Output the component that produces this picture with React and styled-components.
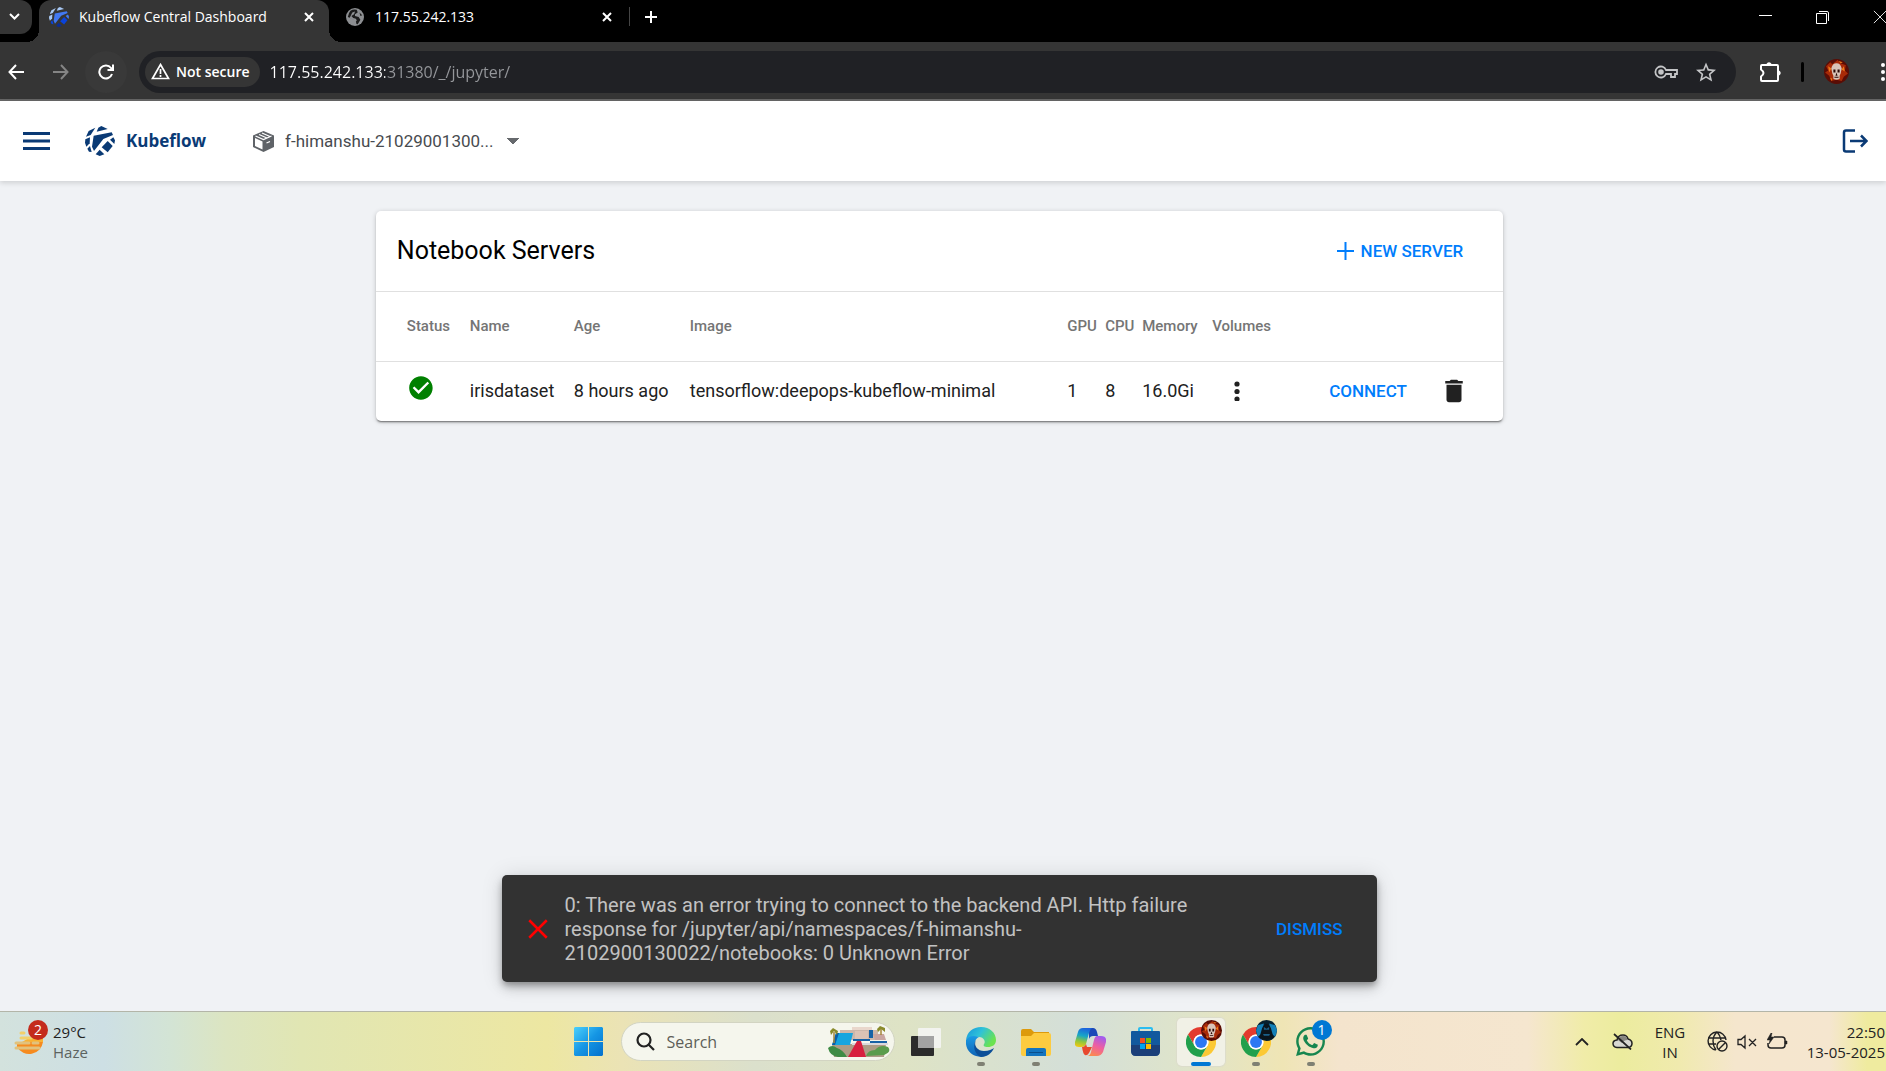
import React from "react";
import styled, { createGlobalStyle, css } from "styled-components";
import { FaWhatsapp } from "react-icons/fa";

const uiFont = '"Open Sans", "Noto Sans", sans-serif';
const webFont = 'Roboto, "Liberation Sans", sans-serif';

const GlobalStyle = createGlobalStyle`
  *, *::before, *::after { box-sizing: border-box; }
  body { margin: 0; background: #f0f2f5; font-family: ${webFont}; overflow: hidden; }
  button, input, select { font: inherit; color: inherit; margin: 0; padding: 0; border: 0; background: none; outline: none; }
  button, select { cursor: pointer; }
  svg { display: block; flex: none; }
`;

const Page = styled.div`
  min-height: 100vh;
  display: flex;
  flex-direction: column;
  overflow: hidden;
`;

/* ---------- browser window ---------- */

const TabStrip = styled.header`
  height: 42px;
  display: flex;
  background: #000;
  color: #fff;
  font: 14px/20px ${uiFont};
`;

const TabSearch = styled.button`
  width: 32px;
  height: 34px;
  padding-right: 4px;
  border-radius: 0 12px 12px 0;
  background: #353535;
  display: flex;
  align-items: center;
  justify-content: center;
`;

const Tab = styled.div`
  position: relative;
  width: ${(p) => (p.$active ? 290 : 301)}px;
  margin-left: ${(p) => (p.$active ? 7 : 0)}px;
  padding: 0 12px 8px 10px;
  display: flex;
  align-items: center;
  gap: 10px;
  border-radius: 12px 12px 0 0;
  ${(p) =>
    p.$active
      ? css`
          background: #353535;
          &::before,
          &::after {
            content: "";
            position: absolute;
            bottom: 0;
            width: 12px;
            height: 12px;
          }
          &::before {
            left: -12px;
            background: radial-gradient(circle at 0 0, transparent 12px, #353535 12px);
          }
          &::after {
            right: -12px;
            background: radial-gradient(circle at 100% 0, transparent 12px, #353535 12px);
          }
        `
      : css`
          padding-left: 17px;
          gap: 11px;
          &::after {
            content: "";
            position: absolute;
            right: 0;
            top: 7px;
            width: 1px;
            height: 19px;
            background: #454545;
          }
        `}
`;

const TabTitle = styled.button`
  flex: 1;
  text-align: left;
  white-space: nowrap;
`;

const CloseTab = styled.button`
  width: 16px;
  height: 16px;
  margin-right: ${(p) => (p.$active ? 0 : 3)}px;
`;

const NewTab = styled.button`
  width: 42px;
  height: 34px;
  display: flex;
  align-items: center;
  justify-content: center;
`;

const WindowControls = styled.div`
  margin: 0 -22px 0 auto;
  display: flex;
  height: 34px;
`;

const WindowButton = styled.button`
  width: 57px;
  display: flex;
  align-items: center;
  justify-content: center;
`;

const Toolbar = styled.nav`
  height: 59px;
  padding: 8px 0 6px;
  display: flex;
  align-items: center;
  background: #353535;
  border-bottom: 2px solid #666;
  color: #fff;
  font-family: ${uiFont};
`;

const NavButtons = styled.div`
  display: flex;
  gap: 3px;
  margin: 0 12px 0 -5px;
`;

const RoundButton = styled.button`
  width: 42px;
  height: 42px;
  border-radius: 50%;
  display: flex;
  align-items: center;
  justify-content: center;
  background: ${(p) => (p.$raised ? "#393939" : "transparent")};
`;

const AddressBar = styled.div`
  flex: 1;
  height: 42px;
  padding: 0 20px 0 6px;
  display: flex;
  align-items: center;
  gap: 10px;
  border-radius: 21px;
  background: #202125;
`;

const SecurityChip = styled.button`
  height: 30px;
  padding: 0 10px 0 6px;
  display: flex;
  align-items: center;
  gap: 6px;
  border-radius: 15px;
  background: #353535;
  font-size: 14px;
  font-weight: 600;
  white-space: nowrap;
`;

const AddressInput = styled.input`
  flex: 1;
  min-width: 0;
  height: 30px;
  font-size: 16px;
  color: transparent;
  background: linear-gradient(90deg, #fff 0 115px, #95979b 115px);
  background-clip: text;
  -webkit-background-clip: text;
`;

const AddressActions = styled.div`
  display: flex;
  align-items: center;
  gap: 18px;
  color: #c4c5c7;
`;

const ToolbarActions = styled.div`
  display: flex;
  align-items: center;
  gap: 20px;
  margin: 0 -11px 0 23px;
`;

const ToolbarRule = styled.span`
  width: 3px;
  height: 20px;
  border-radius: 2px;
  background: #000;
`;

const PlainButton = styled.button`
  display: flex;
  align-items: center;
  justify-content: center;
`;

/* ---------- dashboard ---------- */

const AppBar = styled.header`
  position: relative;
  height: 80px;
  padding: 0 18px 0 23px;
  display: flex;
  align-items: center;
  background: #fff;
  color: #0a3a75;
  box-shadow: 0 2px 5px rgba(0, 0, 0, 0.14);
`;

const Brand = styled.a`
  margin-left: 35px;
  display: flex;
  align-items: center;
  gap: 11px;
  color: #0a3a75;
  text-decoration: none;
  font: 700 17px/24px ${uiFont};
`;

const NamespacePicker = styled.label`
  margin-left: 47px;
  display: flex;
  align-items: center;
  gap: 11px;
  color: #5f6368;
`;

const NamespaceSelect = styled.select`
  appearance: none;
  width: 234px;
  padding-right: 16px;
  font-size: 17px;
  line-height: 24px;
  color: #484b4f;
  background-repeat: no-repeat;
  background-size: 6px 6px;
  background-position: right 6px center, right 0 center;
  background-image: linear-gradient(to bottom left, #66696d 50%, transparent 51%),
    linear-gradient(to bottom right, #66696d 50%, transparent 51%);
`;

const LogoutButton = styled(PlainButton)`
  margin-left: auto;
`;

const Main = styled.main`
  position: relative;
  flex: 1;
  padding: 30px 7px 0 0;
`;

const Card = styled.section`
  width: 60%;
  margin: 0 auto;
  background: #fff;
  border-radius: 5px;
  box-shadow: 0 2px 2px -1px rgba(0, 0, 0, 0.5), 0 1px 5px rgba(0, 0, 0, 0.2);
`;

const CardHeader = styled.div`
  height: 81px;
  padding: 0 40px 0 21px;
  display: flex;
  align-items: center;
  justify-content: space-between;
  border-bottom: 1px solid #e0e0e0;
`;

const CardTitle = styled.h1`
  margin: 0;
  font-size: 25px;
  line-height: 32px;
  font-weight: 400;
  color: #000;
`;

const LinkButton = styled.button`
  display: flex;
  align-items: center;
  gap: 7px;
  font-size: 17px;
  line-height: 24px;
  font-weight: 500;
  color: #007dfc;
  text-transform: uppercase;
`;

const ServerTable = styled.table`
  width: 100%;
  table-layout: fixed;
  border-collapse: collapse;
  color: #212121;
  font-size: 18px;
  line-height: 24px;
  text-align: left;

  th {
    height: 69px;
    padding: 0;
    border-bottom: 1px solid #e0e0e0;
    font-size: 15px;
    font-weight: 500;
    color: #757575;
  }
  td {
    height: 60px;
    padding: 0;
    white-space: nowrap;
  }
  th:first-child {
    padding-left: 31px;
  }
  td:first-child {
    padding-left: 32px;
  }
`;

const Column = styled.col`
  width: ${(p) => (p.$width ? `${p.$width}px` : "auto")};
`;

const MenuButton = styled(PlainButton)`
  width: 50px;
`;

const RowActions = styled.div`
  display: flex;
  align-items: center;
  gap: 32px;
`;

const SnackbarRegion = styled.div`
  position: absolute;
  left: 0;
  right: 8px;
  bottom: 29px;
  display: flex;
  justify-content: center;
`;

const Snackbar = styled.div`
  width: 100%;
  max-width: 875px;
  padding: 18px 34px 17px 26px;
  display: flex;
  align-items: center;
  border-radius: 5px;
  background: #323232;
  color: #c2c2c2;
  box-shadow: 0 4px 6px -1px rgba(0, 0, 0, 0.3), 0 7px 12px rgba(0, 0, 0, 0.14), 0 1px 22px rgba(0, 0, 0, 0.12);
`;

const SnackMessage = styled.p`
  flex: 1;
  margin: 0 55px 0 17px;
  font-size: 20px;
  line-height: 24px;
`;

/* ---------- desktop taskbar ---------- */

const Taskbar = styled.footer`
  height: 60px;
  display: grid;
  grid-template-columns: 1fr auto 1fr;
  align-items: center;
  border-top: 1px solid #b3b5a8;
  font: 15px/20px ${uiFont};
  color: #222;
  background: linear-gradient(
    90deg,
    #d3e2dd 0%,
    #cddfe4 5.5%,
    #d3e4d5 9%,
    #dce5c1 12%,
    #e1e6b3 16%,
    #ede7a2 29%,
    #ebe3b5 33%,
    #dbe0cc 40%,
    #dee3c5 48%,
    #d4dfd8 57%,
    #dfe4ca 63%,
    #efe5b5 68%,
    #f4e4cd 71%,
    #f5e6cf 81%,
    #f0eca8 84%,
    #ecec9e 86%,
    #f0eaae 89%,
    #f5e6cd 92%,
    #f5e6cf 97%,
    #efeb9f 99%
  );
`;

const Weather = styled.button`
  position: relative;
  padding-left: 14px;
  display: flex;
  align-items: center;
  gap: 8px;
  text-align: left;
`;

const Muted = styled.div`
  color: #5c635f;
`;

const Dock = styled.div`
  margin-left: 13px;
  display: flex;
  align-items: center;
  gap: 7px;
`;

const DockButton = styled.button`
  position: relative;
  width: 48px;
  height: 48px;
  display: flex;
  align-items: center;
  justify-content: center;
  border-radius: 5px;
  ${(p) => p.$active && "background: #f1f1e6; box-shadow: 0 0 1px 1px #dcdccb;"}
  &::after {
    content: "";
    position: absolute;
    bottom: 0;
    left: 50%;
    transform: translateX(-50%);
    width: ${(p) => (p.$active ? 20 : p.$open ? 8 : 0)}px;
    height: 4px;
    border-radius: 2px;
    background: ${(p) => (p.$active ? "#0078d4" : "#7f8073")};
  }
`;

const TaskSearch = styled.label`
  width: 274px;
  height: 39px;
  margin-left: 1px;
  padding: 0 4px 0 14px;
  display: flex;
  align-items: center;
  gap: 12px;
  border-radius: 20px;
  background: #f5f6ed;
  border: 1px solid #d2d4c2;
  font-size: 16px;
`;

const SearchInput = styled.input`
  flex: 1;
  min-width: 0;
  &::placeholder {
    color: #5d5e58;
    opacity: 1;
  }
`;

const CountBadge = styled.span`
  position: absolute;
  top: ${(p) => p.$top}px;
  left: ${(p) => p.$left}px;
  width: 20px;
  height: 20px;
  border-radius: 50%;
  background: ${(p) => p.$color};
  color: #fff;
  font-size: 14px;
  line-height: 20px;
  text-align: center;
`;

const ProfileBadge = styled.span`
  position: absolute;
  top: 2px;
  right: 3px;
`;

const Tray = styled.div`
  display: flex;
  align-items: center;
  justify-content: flex-end;
`;

const TrayButton = styled(PlainButton)`
  width: ${(p) => p.$width}px;
  text-align: center;
`;

const Clock = styled.time`
  width: 90px;
  padding-right: 1px;
  text-align: right;
  white-space: nowrap;
`;

/* ---------- drawings ---------- */

const Cross = ({ size = 16, width = 2, inset = 4, color = "#fff" }) => (
  <svg width={size} height={size} viewBox="0 0 16 16" stroke={color} strokeWidth={width} fill="none">
    <path d={`M${inset} ${inset}L${16 - inset} ${16 - inset}M${16 - inset} ${inset}L${inset} ${16 - inset}`} />
  </svg>
);

const KubeflowMark = ({ size, colors = [] }) => {
  const c = (i) => colors[i] || "#0a3a75";
  return (
    <svg width={size} height={size} viewBox="0 0 90 90">
      <path fill={c(0)} d="M31 5L11 15L3 32L17 27Z" />
      <path fill={c(0)} d="M35 17L40 5L49 0L68 9Z" />
      <path fill={c(1)} d="M26 29L80 19L84 27L55 39L27 75L21 62Z" />
      <path fill={c(0)} d="M1 40L15 34L14 52L4 62L0 50Z" />
      <path fill={c(2)} d="M7 68L15 60L20 78L12 77Z" />
      <path fill={c(2)} d="M68 45L83 60L68 79L50 64Z" />
      <path fill={c(1)} d="M85 34L90 43L88 54L75 41Z" />
      <path fill={c(3)} d="M32 85L44 71L58 85L44 90Z" />
    </svg>
  );
};

const Skull = ({ size, blue }) => (
  <svg width={size} height={size} viewBox="0 0 24 24">
    <circle cx="12" cy="12" r="12" fill={blue ? "#06202f" : "#5a0d05"} />
    {blue ? (
      <g>
        <path d="M2 6L9 4L7 15L2 19L0 12ZM22 6L15 4L17 15L22 19L24 12Z" fill="#1480b8" />
        <path d="M7 9Q12 0 17 9L20 20Q12 25 4 20Z" fill="#0a151d" />
        <path d="M9 8L12 10L15 8V11H9ZM8 16H16L15 18H9Z" fill="#1a5f88" />
      </g>
    ) : (
      <g>
        <path d="M2 7L6 3L8 5L13 1L16 4L21 6L20 11L23 14L19 17L17 21L12 20L7 21L5 16L1 13L4 11Z" fill="#a82a08" />
        <path d="M4 7l3 2-2 4zM19 7l-2 3 3 2zM14 2l2 2 2-1zM6 18l2 1-1 2z" fill="#f07d1a" />
        <path d="M7 9Q8 4 12 4T17 9L16 14L15 16V19Q12 21 9 19V16L8 14Z" fill="#d9c3b8" />
        <path d="M9 10h2v3H9zM13 10h2v3h-2zM12 13l1 3h-2zM10 17h4v1h-4z" fill="#2a0805" />
      </g>
    )}
  </svg>
);

const ChromeLogo = () => (
  <svg width="30" height="30" viewBox="0 0 48 48">
    <path fill="#e33b2e" d="M24 0a24 24 0 0 1 20.8 12H24a12 12 0 0 0-10.4 18L3.2 12A24 24 0 0 1 24 0z" />
    <path fill="#fcc934" d="M44.8 12A24 24 0 0 1 24 48l10.4-18A12 12 0 0 0 34.4 18L24 12z" />
    <path fill="#21a04c" d="M3.2 12A24 24 0 0 0 24 48l10.4-18a12 12 0 0 1-20.8 0z" />
    <circle cx="24" cy="24" r="12" fill="#fff" />
    <circle cx="24" cy="24" r="9.5" fill="#2c78f3" />
  </svg>
);

const EdgeLogo = () => (
  <svg width="30" height="30" viewBox="0 0 30 30">
    <defs>
      <linearGradient id="edgeTop" x1="0" y1="0" x2="1" y2="0.5">
        <stop offset="0" stopColor="#1595dc" />
        <stop offset="0.5" stopColor="#2fc2d8" />
        <stop offset="1" stopColor="#6be34f" />
      </linearGradient>
      <linearGradient id="edgeSide" x1="0" y1="0" x2="0" y2="1">
        <stop offset="0" stopColor="#1a9be4" />
        <stop offset="1" stopColor="#0f63b5" />
      </linearGradient>
    </defs>
    <path fill="url(#edgeTop)" d="M0 13C1 5 7 0 15 0C24 0 30 6 30 13C30 18 26 20 22 20C18 20 17 19 18 17C20 15 18 10 13 10C7 9 2 10 0 13Z" />
    <path fill="url(#edgeSide)" d="M0 13C2 9 8 8 13 10C10 11 8 15 9 19C10 25 15 29 21 28C18 30 14 30 10 29C3 27-1 20 0 13Z" />
    <path fill="#0c4f98" d="M10 13C7 19 12 24 18 24C23 24 26 22 28 21C26 26 21 30 15 30C9 28 6 19 10 13Z" />
  </svg>
);

const FolderIcon = () => (
  <svg width="30" height="28" viewBox="0 0 30 28">
    <path fill="#dd9a0c" d="M0 3Q0 1 2 1H10L13 4H28V12H0Z" />
    <path fill="#fdcb40" d="M0 8H10L13 5H28Q30 5 30 7V26Q30 28 28 28H2Q0 28 0 26Z" />
    <path fill="#1374bf" d="M5 28V22Q5 20 7 20H23Q25 20 25 22V28Z" />
    <path stroke="#0a4f8c" d="M8 24.500H22" />
  </svg>
);

const CopilotLogo = () => (
  <svg width="31" height="28" viewBox="0 0 31 28">
    <defs>
      <linearGradient id="copA" x1="0.5" y1="0" x2="0.3" y2="1">
        <stop offset="0" stopColor="#1c63dd" />
        <stop offset="0.4" stopColor="#17a6c8" />
        <stop offset="0.7" stopColor="#8cc63f" />
        <stop offset="1" stopColor="#f2c811" />
      </linearGradient>
      <linearGradient id="copB" x1="0.7" y1="0" x2="0.3" y2="1">
        <stop offset="0" stopColor="#a05cf0" />
        <stop offset="0.5" stopColor="#ef5fa0" />
        <stop offset="1" stopColor="#fb8a4e" />
      </linearGradient>
    </defs>
    <path fill="#1b49b8" d="M14 0H18Q21 0 22 4L23 8H18Q15 8 14 11Z" />
    <path fill="url(#copA)" d="M8 0H17Q15 1 14 5L11 16Q10 19 6 19H4Q-1 19 0 14L3 4Q4 0 8 0Z" />
    <path fill="#e8492f" d="M7 19Q10 19 11 16L12 19H17L14 25Q12 28 10 27Q8 26 7 19Z" />
    <path fill="url(#copB)" d="M22 8H26Q32 8 31 14L28 24Q26 28 22 28H12Q15 28 16 24L19 12Q20 8 22 8Z" />
  </svg>
);

const StoreLogo = () => (
  <svg width="29" height="29" viewBox="0 0 29 29">
    <path fill="none" stroke="#2bbdf0" strokeWidth="2" d="M8 6V2Q8 1 9 1H20Q21 1 21 2V6" />
    <path fill="#12599e" d="M0 5Q0 4 1 4H28Q29 4 29 5V24Q29 29 24 29H5Q0 29 0 24Z" />
    <path fill="#20356a" d="M0 18H29V24Q29 29 24 29H5Q0 29 0 24Z" opacity="0.7" />
    <path fill="#f25022" d="M9 11h5v5H9z" />
    <path fill="#7fba00" d="M15 11h5v5h-5z" />
    <path fill="#00a4ef" d="M9 17h5v5H9z" />
    <path fill="#ffb900" d="M15 17h5v5h-5z" />
  </svg>
);

const WindowsLogo = () => (
  <svg width="29" height="29" viewBox="0 0 29 29">
    <defs>
      <linearGradient id="win" x1="0" y1="0" x2="1" y2="1">
        <stop offset="0" stopColor="#4cd0fb" />
        <stop offset="0.5" stopColor="#1596e4" />
        <stop offset="1" stopColor="#0470cc" />
      </linearGradient>
    </defs>
    <path fill="url(#win)" d="M1 0H14V14H0V1ZM15 0H28L29 1V14H15ZM0 15H14V29H1L0 28ZM15 15H29V28L28 29H15Z" />
  </svg>
);

const CarpetScene = () => (
  <svg width="62" height="31" viewBox="0 0 62 31">
    <path fill="#ad9c86" d="M4 18H58L56 31H6Z" />
    <path fill="#cdb7aa" d="M12 4H50V14H12Z" />
    <path fill="#17a5df" d="M8 7H25L22 19H4Z" />
    <path fill="#0b5fa8" d="M8 7H11L7 19H4Z" />
    <path fill="#dcc3b5" d="M27 5H40V13H27Z" />
    <path fill="#e9d7cc" d="M24 1H44V4H24Z" />
    <path fill="#1762a6" d="M25 13H42V15H25ZM42 15H59V17H42ZM41 4H45V12H41Z" />
    <path fill="#c9a5a0" d="M45 8H56L58 14H47Z" />
    <path fill="#d9d9dd" d="M24 17H60V19H24Z" />
    <path fill="#d71f3f" d="M29 15H33L38 31H20Z" />
    <path fill="#3f8b46" d="M0 22Q4 18 9 22Q15 24 19 31H10Q2 30 0 22Z" />
    <path fill="#5a9c4d" d="M38 30Q40 24 47 24Q52 18 60 21Q64 26 56 29Z" />
    <path stroke="#a7863b" strokeWidth="1.500" d="M6 6V17M53 2V9" />
    <path fill="#8a8b2c" d="M2 5L5 2L10 5L9 9L6 5L3 9ZM49 3L52 0L57 2V6L53 3L50 6Z" />
  </svg>
);

const HazeIcon = () => (
  <svg width="31" height="28" viewBox="0 0 31 28">
    <path fill="#f68b1f" d="M3 14H29A14 14 0 0 1 3 19Z" />
    <path fill="#f9b233" d="M15 10H29V14H8Z" />
    <path stroke="#f2d06b" strokeWidth="3" strokeLinecap="round" d="M7 5H10M7 10H17" />
    <path stroke="#e2c27c" strokeWidth="3" strokeLinecap="round" d="M2 15H15M19 15H24M2 20H25" />
  </svg>
);

const GlobeIcon = () => (
  <svg width="18" height="18" viewBox="2 2 20 20">
    <circle cx="12" cy="12" r="10" fill="#8d8f92" />
    <path fill="#1b1b1b" d="M7 5Q10 3 14 4L15 7L12 9V11L16 12L18 15L15 20Q13 20 13 17L9 14L4 12Q5 7 7 5ZM17 7L20 10L18 11Z" />
    <path fill="#8d8f92" d="M9 7L12 6L11 9L8 11L10 13L13 14L14 16L12 18L10 15L6 13Z" />
  </svg>
);

const stroke = { fill: "none", stroke: "currentColor", strokeWidth: 2 };

const servers = [
  { name: "irisdataset", age: "8 hours ago", image: "tensorflow:deepops-kubeflow-minimal", gpu: 1, cpu: 8, memory: "16.0Gi" },
];

function BrowserChrome() {
  return (
    <>
      <TabStrip>
        <TabSearch aria-label="Search tabs">
          <svg width="12" height="8" viewBox="0 0 12 8" {...stroke}>
            <path d="M2 1L6.500 5.500L11 1" />
          </svg>
        </TabSearch>
        <Tab $active>
          <KubeflowMark size={20} colors={["#a9c9f5", "#4279f2", "#0a43dc", "#0b2c93"]} />
          <TabTitle>Kubeflow Central Dashboard</TabTitle>
          <CloseTab $active aria-label="Close tab">
            <Cross />
          </CloseTab>
        </Tab>
        <Tab>
          <GlobeIcon />
          <TabTitle>117.55.242.133</TabTitle>
          <CloseTab aria-label="Close tab">
            <Cross />
          </CloseTab>
        </Tab>
        <NewTab aria-label="New tab">
          <svg width="14" height="14" viewBox="0 0 14 14" {...stroke}>
            <path d="M7 1V13M1 7H13" />
          </svg>
        </NewTab>
        <WindowControls>
          <WindowButton aria-label="Minimize">
            <svg width="13" height="13" viewBox="0 0 13 13" stroke="#fff">
              <path d="M0 4.500H13" />
            </svg>
          </WindowButton>
          <WindowButton aria-label="Restore">
            <svg width="13" height="13" viewBox="0 0 13 13" fill="none" stroke="#fff">
              <path d="M0.500 2.500H10.500V12.500H0.500ZM3 0.500H11Q12.500 0.500 12.500 2V10" />
            </svg>
          </WindowButton>
          <WindowButton aria-label="Close">
            <Cross size={14} width={1} inset={1} />
          </WindowButton>
        </WindowControls>
      </TabStrip>
      <Toolbar>
        <NavButtons>
          <RoundButton aria-label="Back">
            <svg width="16" height="16" viewBox="0 0 16 16" {...stroke}>
              <path d="M16 8H2M8 1L1.500 8L8 15" />
            </svg>
          </RoundButton>
          <RoundButton aria-label="Forward" disabled>
            <svg width="16" height="16" viewBox="0 0 16 16" fill="none" stroke="#858585" strokeWidth="2">
              <path d="M0 8H14M8 1L14.500 8L8 15" />
            </svg>
          </RoundButton>
          <RoundButton $raised aria-label="Reload">
            <svg width="16" height="16" viewBox="0 0 16 16" {...stroke}>
              <path d="M14 10A6.500 6.500 0 1 1 13 4L15 6M15 0.500V6H9.500" />
            </svg>
          </RoundButton>
        </NavButtons>
        <AddressBar>
          <SecurityChip>
            <svg width="19" height="17" viewBox="0 0 19 17" fill="none" stroke="#fff" strokeWidth="1.700">
              <path d="M9.500 1.500L17.500 15.500H1.500ZM9.500 6V11M9.500 12V14" />
            </svg>
            Not secure
          </SecurityChip>
          <AddressInput aria-label="Address" defaultValue="117.55.242.133:31380/_/jupyter/" />
          <AddressActions>
            <PlainButton aria-label="Passwords">
              <svg width="24" height="14" viewBox="0 0 24 14" {...stroke}>
                <path d="M12 5H23V9H21V12H17V9H12A5.500 5.500 0 1 1 12 5Z" strokeWidth="1.800" />
                <circle cx="7" cy="7" r="1.800" fill="currentColor" />
              </svg>
            </PlainButton>
            <PlainButton aria-label="Bookmark">
              <svg width="20" height="20" viewBox="2 1.500 20 20" fill="currentColor">
                <path d="M22 9.240l-7.190-.62L12 2 9.190 8.630 2 9.240l5.460 4.730L5.820 21 12 17.270 18.180 21l-1.630-7.030L22 9.240zM12 15.400l-3.760 2.270 1-4.280-3.320-2.880 4.380-.38L12 6.100l1.710 4.040 4.380.38-3.320 2.880 1 4.280L12 15.400z" />
              </svg>
            </PlainButton>
          </AddressActions>
        </AddressBar>
        <ToolbarActions>
          <PlainButton aria-label="Extensions">
            <svg width="22" height="22" viewBox="0 0 22 22" {...stroke}>
              <path strokeLinejoin="round" d="M3 4H18Q19 4 19 5V19Q19 20 18 20H3Q2 20 2 19V15.500Q7 12 2 8.500V5Q2 4 3 4Z" />
              <path fill="currentColor" stroke="none" d="M7 3.500Q10 -1 13 3.500ZM19.500 9Q24 12 19.500 15Z" />
            </svg>
          </PlainButton>
          <ToolbarRule />
          <PlainButton aria-label="Profile">
            <Skull size={25} />
          </PlainButton>
          <PlainButton aria-label="Menu">
            <svg width="28" height="18" viewBox="0 0 28 18" fill="#fff">
              <circle cx="14" cy="2" r="2" />
              <circle cx="14" cy="9" r="2" />
              <circle cx="14" cy="16" r="2" />
            </svg>
          </PlainButton>
        </ToolbarActions>
      </Toolbar>
    </>
  );
}

function Dashboard() {
  return (
    <>
      <AppBar>
        <PlainButton aria-label="Open menu">
          <svg width="27" height="18" viewBox="0 0 27 18" fill="currentColor">
            <path d="M0 0H27V3H0ZM0 7.500H27V10.500H0ZM0 15H27V18H0Z" />
          </svg>
        </PlainButton>
        <Brand href="#home">
          <KubeflowMark size={30} />
          Kubeflow
        </Brand>
        <NamespacePicker aria-label="Namespace">
          <svg width="21" height="21" viewBox="0 0 21 21">
            <path fill="currentColor" d="M10.500 0L21 4.500V16L10.500 21L0 16V4.500Z" />
            <path fill="#fff" d="M2 7L9.500 10.500V18.500L2 15Z" />
            <path stroke="#fff" strokeWidth="1.300" fill="none" d="M2.500 5L10.500 8.500L18.500 5M6 3.500L14 7M9 2L17 5.500M13.500 12L17 10.500" />
          </svg>
          <NamespaceSelect defaultValue="ns">
            <option value="ns">f-himanshu-21029001300...</option>
          </NamespaceSelect>
        </NamespacePicker>
        <LogoutButton aria-label="Log out">
          <svg width="26" height="24" viewBox="0 0 26 24" fill="none" stroke="currentColor" strokeWidth="2.500">
            <path d="M13 1.500H4Q2 1.500 2 3.500V20.500Q2 22.500 4 22.500H13M8 12H24M19 6.500L24.500 12L19 17.500" />
          </svg>
        </LogoutButton>
      </AppBar>
      <Main>
        <Card>
          <CardHeader>
            <CardTitle>Notebook Servers</CardTitle>
            <LinkButton>
              <svg width="17" height="18" viewBox="0 0 17 18" {...stroke}>
                <path d="M8.500 0V18M0 9H17" />
              </svg>
              New Server
            </LinkButton>
          </CardHeader>
          <ServerTable>
            <colgroup>
              <Column $width={94} />
              <Column $width={104} />
              <Column $width={116} />
              <Column />
              <Column $width={38} />
              <Column $width={37} />
              <Column $width={70} />
              <Column $width={117} />
              <Column $width={174} />
            </colgroup>
            <thead>
              <tr>
                <th>Status</th>
                <th>Name</th>
                <th>Age</th>
                <th>Image</th>
                <th>GPU</th>
                <th>CPU</th>
                <th>Memory</th>
                <th>Volumes</th>
                <th aria-label="Actions" />
              </tr>
            </thead>
            <tbody>
              {servers.map((s) => (
                <tr key={s.name}>
                  <td>
                    <svg width="27" height="30" viewBox="1 2 23 25" role="img" aria-label="Running">
                      <path fill="#008000" d="M12 2C6.480 2 2 6.480 2 12s4.480 10 10 10 10-4.480 10-10S17.520 2 12 2zm-2 15l-5-5 1.410-1.410L10 14.170l7.590-7.590L19 8l-9 9z" />
                    </svg>
                  </td>
                  <td>{s.name}</td>
                  <td>{s.age}</td>
                  <td>{s.image}</td>
                  <td>{s.gpu}</td>
                  <td>{s.cpu}</td>
                  <td>{s.memory}</td>
                  <td>
                    <MenuButton aria-label="Volumes">
                      <svg width="6" height="20" viewBox="0 0 6 20" fill="#212121">
                        <circle cx="3" cy="3" r="2.600" />
                        <circle cx="3" cy="10.500" r="2.600" />
                        <circle cx="3" cy="18" r="2.600" />
                      </svg>
                    </MenuButton>
                  </td>
                  <td>
                    <RowActions>
                      <LinkButton>Connect</LinkButton>
                      <PlainButton aria-label="Delete server">
                        <svg width="30" height="30" viewBox="0 0 24 24" fill="#212121">
                          <path d="M6 19c0 1.100.9 2 2 2h8c1.100 0 2-.9 2-2V7H6v12zM19 4h-3.500l-1-1h-5l-1 1H5v2h14V4z" />
                        </svg>
                      </PlainButton>
                    </RowActions>
                  </td>
                </tr>
              ))}
            </tbody>
          </ServerTable>
        </Card>
        <SnackbarRegion>
          <Snackbar role="alert">
            <Cross size={20} width={2} inset={1} color="#f00" />
            <SnackMessage>
              0: There was an error trying to connect to the backend API. Http failure response for
              /jupyter/api/namespaces/f-himanshu-2102900130022/notebooks: 0 Unknown Error
            </SnackMessage>
            <LinkButton>Dismiss</LinkButton>
          </Snackbar>
        </SnackbarRegion>
      </Main>
    </>
  );
}

function DesktopTaskbar() {
  return (
    <Taskbar>
      <Weather>
        <HazeIcon />
        <CountBadge $top={-2} $left={28} $color="#c42b1c">2</CountBadge>
        <div>
          <div>29°C</div>
          <Muted>Haze</Muted>
        </div>
      </Weather>
      <Dock>
        <DockButton aria-label="Start">
          <WindowsLogo />
        </DockButton>
        <TaskSearch>
          <svg width="19" height="19" viewBox="0 0 19 19" fill="none" stroke="#222" strokeWidth="2.200">
            <circle cx="8" cy="8" r="6.500" />
            <path d="M12.500 12.500L18 18" />
          </svg>
          <SearchInput aria-label="Search" placeholder="Search" />
          <CarpetScene />
        </TaskSearch>
        <DockButton aria-label="Task view">
          <svg width="30" height="28" viewBox="0 0 30 28">
            <rect y="8" width="23" height="20" rx="1" fill="#2b2b2b" />
            <rect x="7" width="23" height="20" rx="1" fill="#f6f6f6" opacity="0.85" />
            <path d="M7 8H23V20H7Z" fill="#a3a3a3" />
          </svg>
        </DockButton>
        <DockButton $open aria-label="Edge">
          <EdgeLogo />
        </DockButton>
        <DockButton $open aria-label="File Explorer">
          <FolderIcon />
        </DockButton>
        <DockButton aria-label="Copilot">
          <CopilotLogo />
        </DockButton>
        <DockButton aria-label="Store">
          <StoreLogo />
        </DockButton>
        <DockButton $active aria-label="Chrome">
          <ChromeLogo />
          <ProfileBadge>
            <Skull size={21} />
          </ProfileBadge>
        </DockButton>
        <DockButton $open aria-label="Chrome, second profile">
          <ChromeLogo />
          <ProfileBadge>
            <Skull size={21} blue />
          </ProfileBadge>
        </DockButton>
        <DockButton $open aria-label="WhatsApp">
          <FaWhatsapp size={33} color="#17864f" />
          <CountBadge $top={2} $left={25} $color="#0078d4">1</CountBadge>
        </DockButton>
      </Dock>
      <Tray>
        <TrayButton $width={40} aria-label="Hidden icons">
          <svg width="14" height="8" viewBox="0 0 14 8" fill="none" stroke="#222" strokeWidth="1.800">
            <path d="M1 7L7 1L13 7" />
          </svg>
        </TrayButton>
        <TrayButton $width={40} aria-label="Cloud sync off">
          <svg width="21" height="17" viewBox="0 0 21 17">
            <path d="M5 14.500Q1 14 1 10.500Q1 7.500 5 7Q6 2 11 2Q15 2 16 6Q20 7 20 10.500Q20 14 16 14.500Z" fill="#d8d8d2" stroke="#222" strokeWidth="1.500" />
            <path d="M6 7Q7 3 11 3Q15 3 15.500 7Q12 7 10 10Z" fill="#85857f" />
            <path d="M2 1L19 16.500" stroke="#222" strokeWidth="1.700" />
          </svg>
        </TrayButton>
        <TrayButton $width={56}>
          ENG
          <br />
          IN
        </TrayButton>
        <TrayButton $width={38} aria-label="Network">
          <svg width="21" height="21" viewBox="0 0 21 21" fill="none" stroke="#222" strokeWidth="1.400">
            <path d="M19 9A9 9 0 1 0 9 19M1 7H19M1 13H9M9 19Q6 15 6 10T10 1Q13 4 14 9" />
            <circle cx="15" cy="15" r="5" />
            <path d="M11.500 18.500L18.500 11.500" />
          </svg>
        </TrayButton>
        <TrayButton $width={22} aria-label="Muted">
          <svg width="20" height="16" viewBox="0 0 20 16" fill="none" stroke="#222" strokeWidth="1.300">
            <path d="M1 5.500V10.500H4L8 14V2L4 5.500ZM12 5L19 12M19 5L12 12" />
          </svg>
        </TrayButton>
        <TrayButton $width={38} aria-label="Battery">
          <svg width="21" height="17" viewBox="0 0 21 17" fill="none" stroke="#222" strokeWidth="1.500">
            <path d="M7 4H15Q18 4 18 7V12Q18 15 15 15H4Q1 15 1 12V10" />
            <path d="M4 0L0 7H3L2 11L7 4H4L5 0ZM18 8H20V11H18Z" fill="#222" strokeWidth="0.500" />
          </svg>
        </TrayButton>
        <Clock dateTime="2025-05-13T22:50">
          22:50
          <br />
          13-05-2025
        </Clock>
      </Tray>
    </Taskbar>
  );
}

export default function App() {
  return (
    <Page>
      <GlobalStyle />
      <BrowserChrome />
      <Dashboard />
      <DesktopTaskbar />
    </Page>
  );
}
